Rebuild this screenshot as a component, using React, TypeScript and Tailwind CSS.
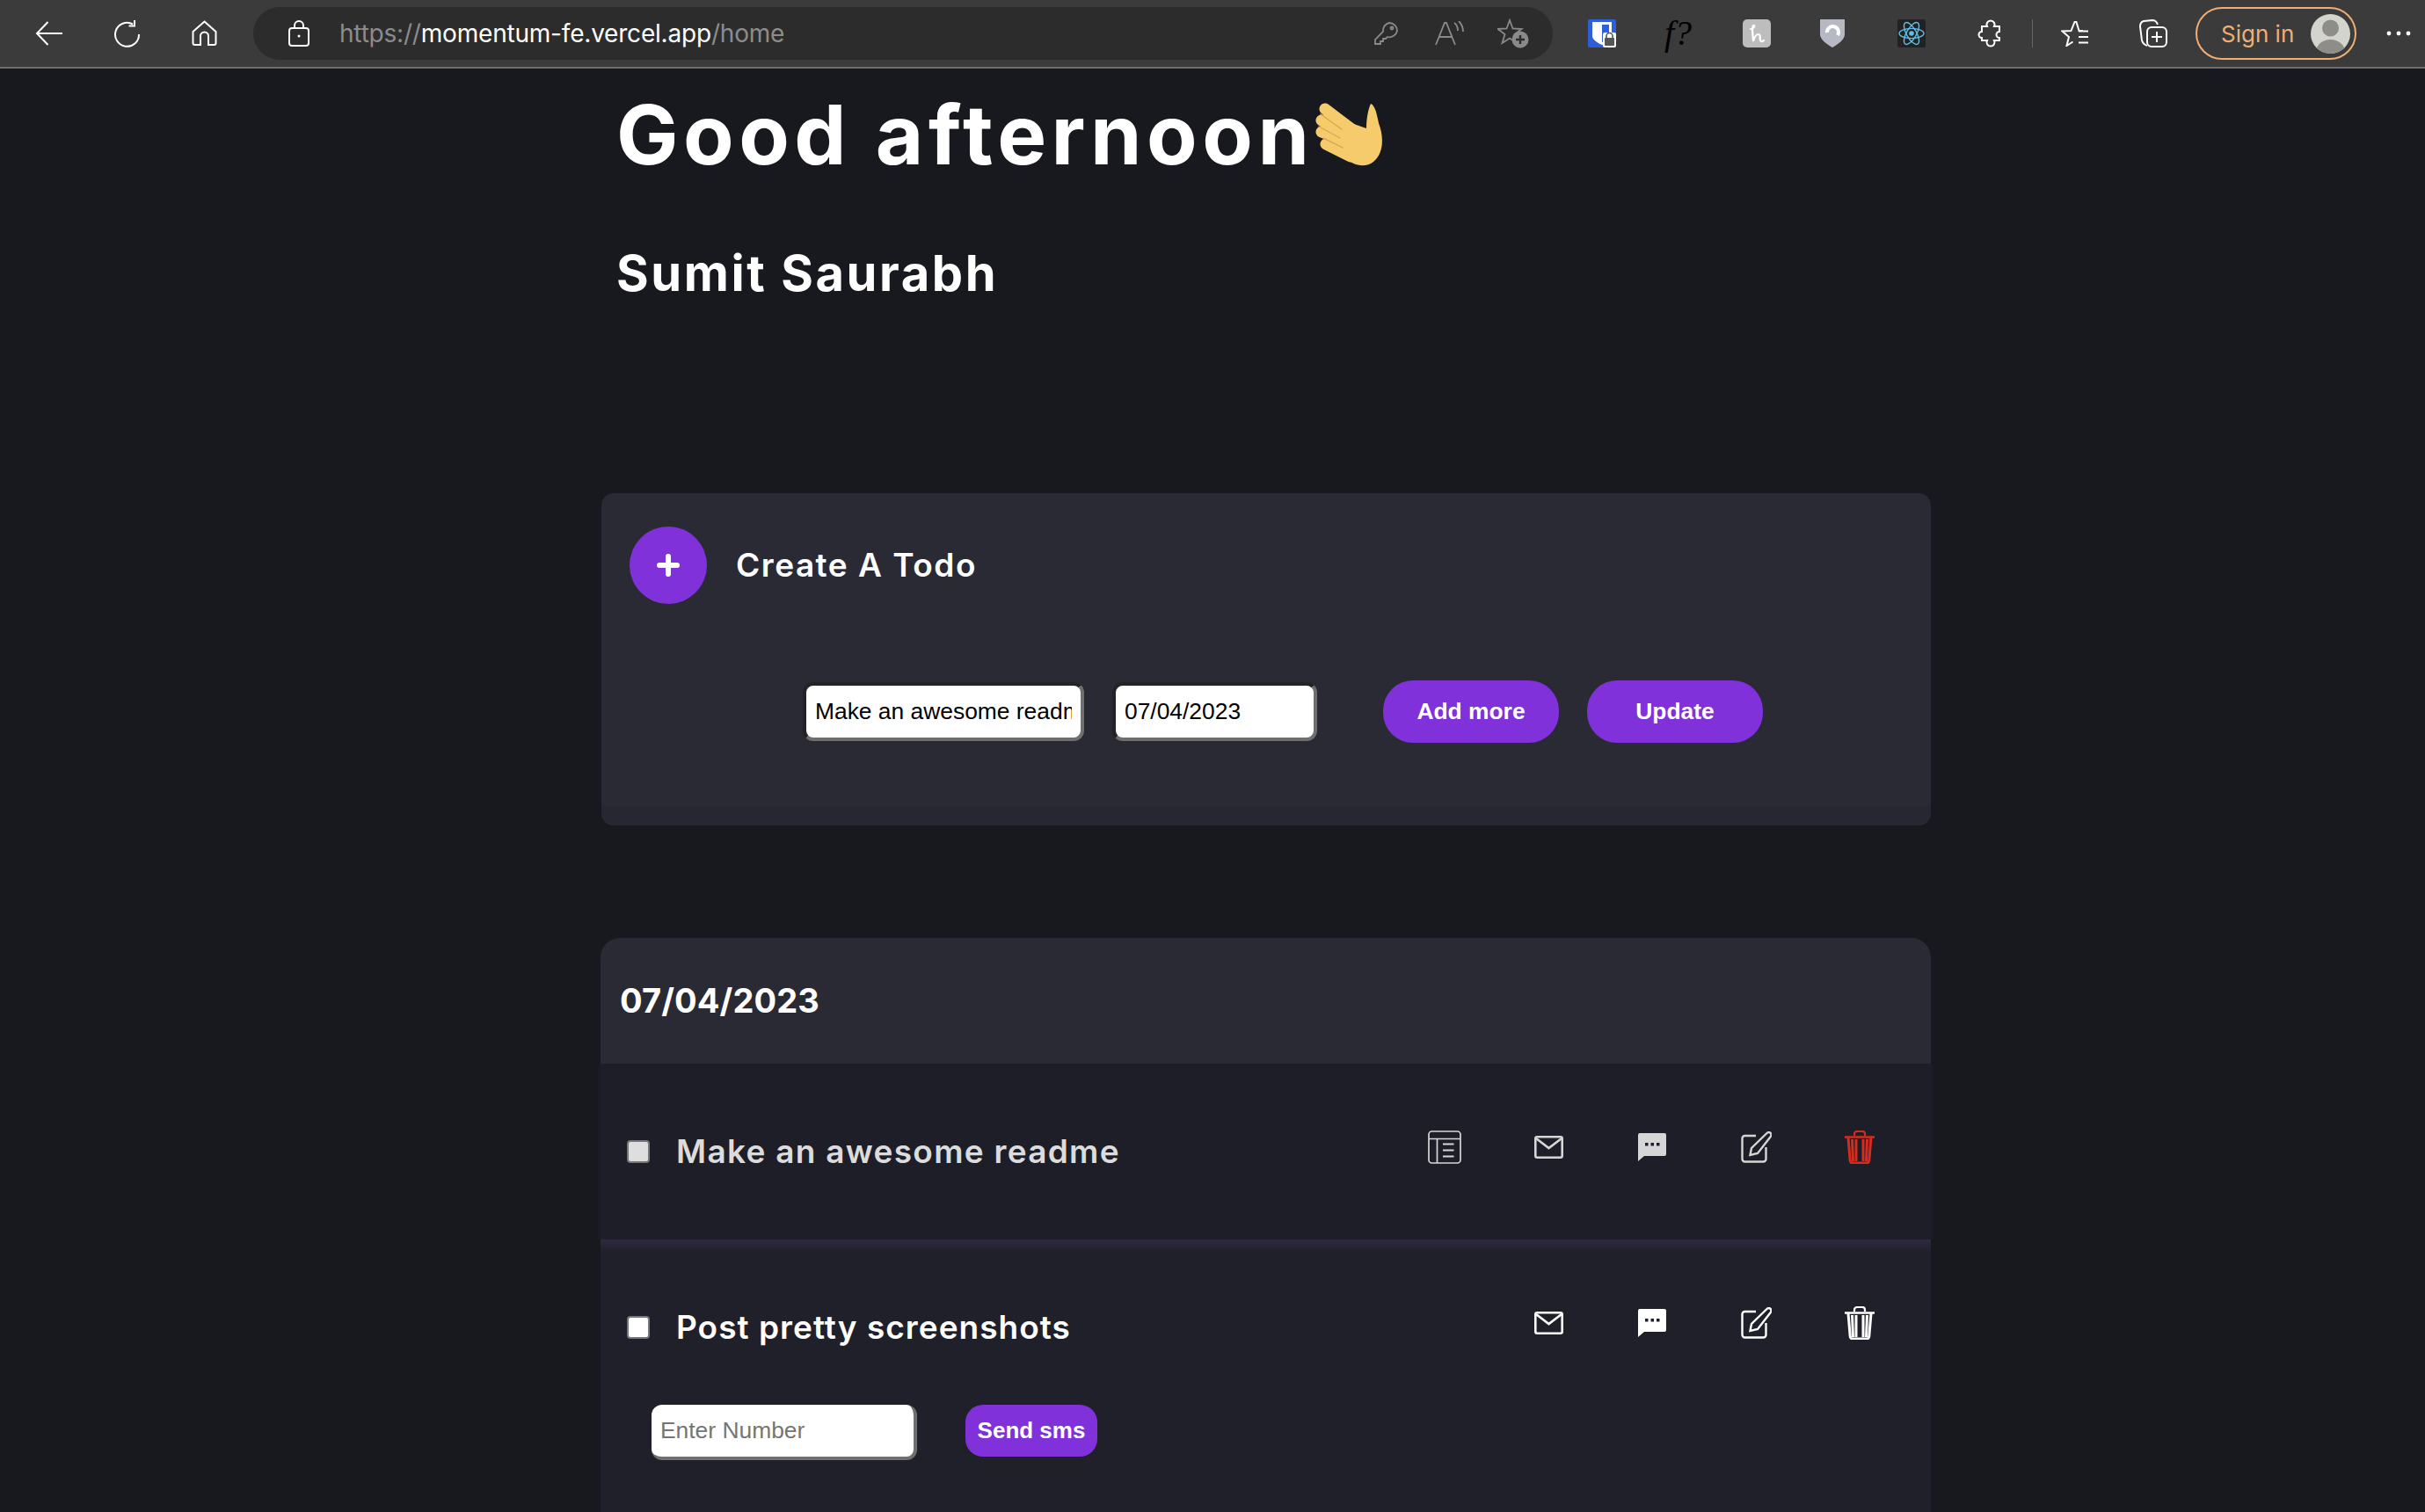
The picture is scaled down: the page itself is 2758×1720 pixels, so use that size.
import React from 'react';

const BODY = "font-['Inter',sans-serif]";
const ARIAL = "font-['Liberation_Sans',Arial,sans-serif]";

const STAR = 'M14 2 L17.5 11.5 L27.5 12 L19.5 18 L22.5 28 L14 22.5 L5.5 28 L8.5 18 L.5 12 L10.5 11.5 Z';

function BrowserBar() {
  return (
    <div className="flex h-[78px] items-center border-b-2 border-[#6d6d6d] bg-[#3b3b3b] pl-[40px] text-white">
      {/* nav */}
      <svg width="31" height="28" viewBox="0 0 31 28" fill="none" stroke="currentColor" strokeWidth="2">
        <path d="M31 14H2M14.5 1 2 14l12.5 13" />
      </svg>
      <svg className="ml-[57px]" width="33" height="31" viewBox="0 0 33 31" fill="none" stroke="currentColor" strokeWidth="2">
        <path d="M23 4.5A13.5 13.5 0 1 0 30 16M25 0v6.5h-6.5" />
      </svg>
      <svg className="ml-[57px]" width="29" height="30" viewBox="0 0 29 30" fill="none" stroke="currentColor" strokeWidth="2">
        <path d="M14.5 1.5 27.5 13v13a2 2 0 0 1-2 2H19V18a4.5 4.5 0 0 0-9 0v10H3.5a2 2 0 0 1-2-2V13Z" />
      </svg>

      {/* address bar */}
      <div className="ml-[41px] flex h-[60px] w-[1478px] items-center rounded-full bg-[#2c2c2c] pr-[27px]">
        <svg className="ml-[40px]" width="24" height="30" viewBox="0 0 24 30" fill="none" stroke="currentColor" strokeWidth="2">
          <rect x="1" y="9" width="22" height="20" rx="3" />
          <path d="M7 9V6a5 5 0 0 1 10 0v3" />
          <circle cx="12" cy="18" r="1.5" fill="currentColor" stroke="none" />
        </svg>
        <div className={`ml-[34px] text-[28px] tracking-[-0.2px] text-[#8c8c8c] ${BODY}`}>
          https://<span className="text-white">momentum-fe.vercel.app</span>/home
        </div>
        <div className="ml-auto flex items-center text-[#8a8a8a]">
          <svg width="27" height="26" viewBox="0 0 27 26" fill="none" stroke="currentColor" strokeWidth="1.8">
            <path d="M17 1a9 9 0 0 1 9 9 9 9 0 0 1-11 7l-2 2h-3v3H7v3H1v-5L10 11a9 9 0 0 1 7-10Z" />
            <circle cx="20" cy="7" r="1.5" />
          </svg>
          <svg className="ml-[42px]" width="33" height="28" viewBox="0 0 33 28" fill="none" stroke="currentColor" strokeWidth="1.8">
            <path d="M1 27 11 2h2l10 25M5 18h14M22 2c3 2 4 5 4 9M27 0c3 3 5 7 5 12" />
          </svg>
          <svg className="ml-[38px]" width="36" height="34" viewBox="0 0 36 34" fill="none">
            <path d={STAR} stroke="currentColor" strokeWidth="1.8" />
            <circle cx="26" cy="24" r="9.5" fill="currentColor" />
            <path d="M26 19v10M21 24h10" stroke="#2c2c2c" strokeWidth="2.4" />
          </svg>
        </div>
      </div>

      {/* extensions */}
      <svg className="ml-[40px]" width="32" height="32" viewBox="0 0 32 32">
        <rect width="32" height="32" rx="2" fill="#2f5fd8" />
        <path d="M5 3h22v16c0 4-6 8-11 10-5-2-11-6-11-10Z" fill="#fff" />
        <path d="M16 6h8v13c0 2-4 5-8 7Z" fill="#2f5fd8" />
        <rect x="17" y="15" width="15" height="17" rx="2" fill="#fff" />
        <path d="M21 21v-2a3.5 3.5 0 0 1 7 0v2" fill="none" stroke="#555" strokeWidth="1.6" />
        <rect x="19" y="21" width="11" height="9" rx="1" fill="#555" />
      </svg>
      <div className="ml-[55px] w-[34px] whitespace-nowrap font-['Liberation_Serif',serif] text-[40px] leading-none italic text-black">f?</div>
      <svg className="ml-[55px]" width="32" height="32" viewBox="0 0 32 32">
        <rect width="32" height="32" rx="5" fill="#bdbdbd" />
        <path d="M9 11c3 0 5-3 4-4s-2 2-2 5l1 13c1-4 3-8 6-8 3 0 1 5 2 7s2 1 4 0" fill="none" stroke="#fff" strokeWidth="2.2" strokeLinecap="round" />
      </svg>
      <svg className="ml-[56px]" width="28" height="32" viewBox="0 0 28 32">
        <path d="M0 0h28v17c0 6-7 11-14 15C7 28 0 23 0 17Z" fill="#b6b8c4" />
        <path d="M8 15a6.500 6.500 0 1 1 12 3" fill="none" stroke="#fff" strokeWidth="4" />
      </svg>
      <svg className="ml-[60px]" width="32" height="32" viewBox="0 0 32 32">
        <rect width="32" height="32" rx="2" fill="#222" />
        <g fill="none" stroke="#61bfe6" strokeWidth="1.4">
          <ellipse cx="16" cy="16" rx="14" ry="5.6" />
          <ellipse cx="16" cy="16" rx="14" ry="5.6" transform="rotate(60 16 16)" />
          <ellipse cx="16" cy="16" rx="14" ry="5.6" transform="rotate(120 16 16)" />
        </g>
        <circle cx="16" cy="16" r="2.8" fill="#61bfe6" />
      </svg>
      <svg className="ml-[59px]" width="30" height="32" viewBox="0 0 30 32" fill="none" stroke="currentColor" strokeWidth="2">
        <path d="M5 8h6a4.5 4.5 0 1 1 8 0h6v6a3.5 3.5 0 0 0 0 7v3h-6a4.5 4.5 0 1 1-8 0H5v-3a3.5 3.5 0 0 1 0-7Z" />
      </svg>
      <div className="ml-[32px] h-[32px] w-px bg-[#666]" />
      <svg className="ml-[32px]" width="32" height="30" viewBox="0 0 32 30" fill="none" stroke="currentColor" strokeWidth="2">
        <path d="M25 12h-4.5L17.5 2h-2l-4 10-10 .5 7.5 6.500L6.500 29l7-4.500M20 12.500h11M20 19h11M20 25.500h11" />
      </svg>
      <svg className="ml-[57px]" width="32" height="32" viewBox="0 0 32 32" fill="none" stroke="currentColor" strokeWidth="2">
        <path d="M9 30C6 29 4 27 3 24L1 8c0-3 1-5 4-6l10-1c3 0 5 2 6 5" />
        <rect x="9" y="9" width="22" height="22" rx="5" />
        <path d="M20 14v12M14 20h12" />
      </svg>

      {/* profile */}
      <div className="ml-[32px] flex h-[60px] w-[183px] items-center rounded-full border-2 border-[#f0ae75] pl-[27px]">
        <span className={`text-[26px] text-[#f0ae75] ${BODY}`}>Sign in</span>
        <svg className="ml-auto mr-[5px]" width="45" height="45" viewBox="0 0 45 45">
          <clipPath id="avatar"><circle cx="22.5" cy="22.500" r="22.500" /></clipPath>
          <g clipPath="url(#avatar)">
            <rect width="45" height="45" fill="#d4d4cf" />
            <circle cx="22.5" cy="16" r="9.5" fill="#8f8d88" />
            <ellipse cx="22.5" cy="42" rx="16" ry="13" fill="#8f8d88" />
          </g>
        </svg>
      </div>
      <svg className="ml-[34px]" width="28" height="6" viewBox="0 0 28 6" fill="currentColor">
        <circle cx="3" cy="3" r="2.4" />
        <circle cx="14" cy="3" r="2.4" />
        <circle cx="25" cy="3" r="2.4" />
      </svg>
    </div>
  );
}

function WaveHand() {
  return (
    <svg className="ml-[2px] shrink-0" width="78" height="74" viewBox="0 0 78 74" fill="none">
      <g stroke="#f5cb6b" strokeWidth="13" strokeLinecap="round">
        <path d="M11 8 48 36M7 21l41 21M7 34l39 16M12 48l28 14" />
      </g>
      <path d="M35 22 58 30C58 20 60 8 63 2c5 2 7 12 9 22 6 16 6 34-6 44-10 8-24 4-34-6Z" fill="#f5cb6b" />
      <g stroke="#d8a94f" strokeWidth="1.4" strokeLinecap="round">
        <path d="M6 14 30 31M4 28l24 13M9 41l22 11" />
      </g>
    </svg>
  );
}

function MailIcon() {
  return (
    <svg width="33" height="26" viewBox="0 0 33 26" fill="none" stroke="currentColor" strokeWidth="2.6">
      <rect x="1.3" y="1.3" width="30.400" height="23.400" rx="2" />
      <path d="M2 3l14.500 11L31 3" />
    </svg>
  );
}

function ChatIcon({ dot }: { dot: string }) {
  return (
    <svg width="32" height="32" viewBox="0 0 32 32">
      <path d="M2 0h28a2 2 0 0 1 2 2v22a2 2 0 0 1-2 2H7l-7 6V2a2 2 0 0 1 2-2Z" fill="currentColor" />
      <rect x="8" y="11" width="3.500" height="3.500" fill={dot} />
      <rect x="14.500" y="11" width="3.500" height="3.500" fill={dot} />
      <rect x="21" y="11" width="3.500" height="3.500" fill={dot} />
    </svg>
  );
}

function EditIcon() {
  return (
    <svg width="35" height="36" viewBox="0 0 35 36" fill="none" stroke="currentColor" strokeWidth="2.4">
      <path d="M17 5H4.500a3 3 0 0 0-3 3v23.500a3 3 0 0 0 3 3h21a3 3 0 0 0 3-3V18" />
      <path d="M29.500 2a2.900 2.900 0 0 1 4.200 4L19 25l-8.500 2 1.500-8Z" />
    </svg>
  );
}

function TrashIcon() {
  return (
    <svg width="34" height="38" viewBox="0 0 34 38" fill="none" stroke="currentColor">
      <path d="M0 7.500h34" strokeWidth="2.600" />
      <path d="M11 6V4a3 3 0 0 1 3-3h6a3 3 0 0 1 3 3v2" strokeWidth="2.200" />
      <path d="M4 8l2.200 26a3 3 0 0 0 3 3h15.600a3 3 0 0 0 3-3L30 8" strokeWidth="3" />
      <path d="M13 10v25M21 10v25" strokeWidth="3" />
      <path d="M8.500 10l1 25M25.500 10l-1 25" strokeWidth="3" />
    </svg>
  );
}

function BookIcon() {
  return (
    <svg width="38" height="38" viewBox="0 0 38 38" fill="none" stroke="currentColor" strokeWidth="1.700">
      <rect x="1" y="1" width="36" height="36" rx="3.500" />
      <path d="M1 9.500h36M10.500 9.500V37" />
      <path d="M17 15.500h12.500M17 22.500h12.500M17 29.500h12.500" strokeWidth="2.200" />
    </svg>
  );
}

function Slot({ children, className = '' }: { children: React.ReactNode; className?: string }) {
  return <div className={`flex w-[118px] items-center justify-center ${className}`}>{children}</div>;
}

function TodoRow({ title, done, className, dot }: { title: string; done?: boolean; className: string; dot: string }) {
  return (
    <div className={`flex h-[200px] items-center pl-[30px] pr-[22px] ${className}`}>
      <input
        type="checkbox"
        readOnly
        className={`h-[26px] w-[26px] shrink-0 appearance-none rounded-[4px] border-2 border-[#777] ${done ? 'bg-[#dedede]' : 'bg-white'}`}
      />
      <div className={`ml-[30px] text-[37px] font-semibold ${BODY} ${done ? 'tracking-[1.28px] text-[#dcdcdc]' : 'tracking-[1.03px] text-white'}`}>{title}</div>
      <div className={`ml-auto flex -translate-y-[5px] items-center ${done ? 'text-[#d6d6d6]' : 'text-white'}`}>
        {done && <Slot><BookIcon /></Slot>}
        <Slot><MailIcon /></Slot>
        <Slot><ChatIcon dot={dot} /></Slot>
        <Slot><EditIcon /></Slot>
        <Slot className={done ? 'text-[#d42c1f]' : ''}><TrashIcon /></Slot>
      </div>
    </div>
  );
}

const FIELD =
  "box-border rounded-[12px] border-4 border-t-[#232323] border-l-[#232323] border-r-[#6f6f6f] border-b-[#6f6f6f] bg-white px-[10px] text-[26.400px] text-black outline-none font-['Liberation_Sans',Arial,sans-serif]";

export default function App() {
  return (
    <div className="min-h-[1720px] overflow-hidden bg-[#18191f]">
      <BrowserBar />
      <div className="ml-[683px] h-[1642px] w-[1513px]">
        <div className="flex items-center pt-[20px] pl-[18px]">
          <h1 className={`text-[94px] leading-[110px] font-bold tracking-[5.5px] text-white ${BODY}`}>Good afternoon</h1>
          <WaveHand />
        </div>
        <h2 className={`mt-[68px] pl-[18px] text-[56px] leading-[70px] font-bold tracking-[2.6px] text-white ${BODY}`}>Sumit Saurabh</h2>

        {/* create card */}
        <div className="mt-[215px] ml-px flex h-[378px] flex-col overflow-hidden rounded-[14px] bg-[#2a2a35]">
          <div className="flex items-center pt-[38px] pl-[32px]">
            <div className="flex h-[88px] w-[88px] items-center justify-center rounded-full bg-[#8031d9]">
              <svg width="26" height="26" viewBox="0 0 26 26" stroke="#fff" strokeWidth="6" strokeLinecap="round">
                <path d="M13 3v20M3 13h20" />
              </svg>
            </div>
            <div className={`ml-[33px] text-[37px] font-semibold tracking-[1.5px] text-white ${BODY}`}>Create A Todo</div>
          </div>
          <div className="mt-[87px] flex items-center pl-[229px]">
            <input className={`h-[67px] w-[320px] ${FIELD}`} value="Make an awesome readme" readOnly />
            <input className={`ml-[32px] h-[67px] w-[233px] ${FIELD}`} value="07/04/2023" readOnly />
            <button className={`ml-[75px] h-[71px] w-[200px] rounded-[34px] bg-[#8031d9] text-[26.400px] font-bold text-white ${ARIAL}`}>Add more</button>
            <button className={`ml-[32px] h-[71px] w-[200px] rounded-[34px] bg-[#8031d9] text-[26.400px] font-bold text-white ${ARIAL}`}>Update</button>
          </div>
          <div className="mt-auto h-[22px] bg-[#272731]" />
        </div>

        {/* todos of the day */}
        <div className="mt-[128px]">
          <div className={`flex h-[143px] items-center rounded-t-[22px] bg-[#2a2a35] pl-[22px] text-[38px] font-bold tracking-[0.1px] text-white ${BODY}`}>07/04/2023</div>
          <TodoRow title="Make an awesome readme" done className="bg-[#1e1e28] shadow-[0_0_4px_2px_#1e1e28] [clip-path:inset(0_-6px)]" dot="#1e1e28" />
          <div className="bg-[linear-gradient(#2f2b3f,#20202a_14px)] pb-[200px]">
            <TodoRow title="Post pretty screenshots" className="bg-transparent" dot="#20202a" />
            <div className="flex items-start pl-[58px]">
              <input className={`-mt-[12px] h-[63px] w-[302px] ${FIELD} !border-t-0 !border-l-0 placeholder:text-[#757575]`} placeholder="Enter Number" readOnly />
              <button className={`-mt-[12px] ml-[55px] h-[59px] w-[150px] rounded-[20px] bg-[#8031d9] text-[26px] font-bold text-white ${ARIAL}`}>Send sms</button>
            </div>
          </div>
        </div>
      </div>
    </div>
  );
}
